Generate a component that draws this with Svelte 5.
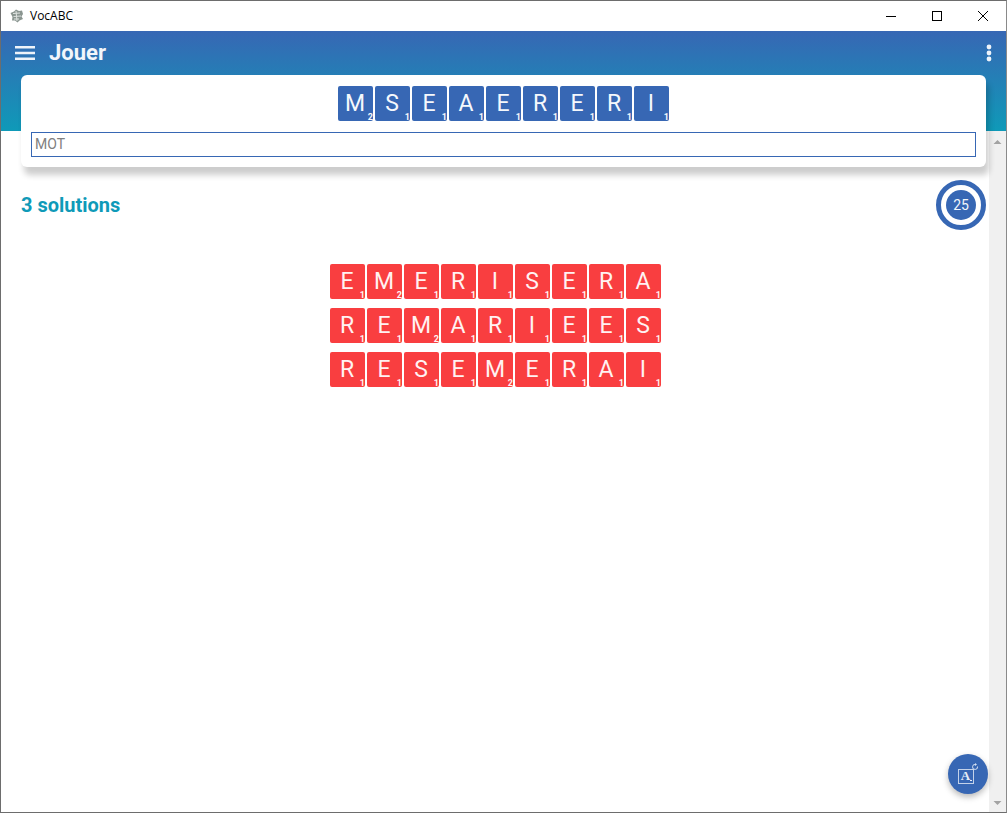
<script lang="ts">
  const rack = [["M", 2], ["S", 1], ["E", 1], ["A", 1], ["E", 1], ["R", 1], ["E", 1], ["R", 1], ["I", 1]];
  const points: Record<string, number> = { M: 2 };
  const solutions = ["EMERISERA", "REMARIEES", "RESEMERAI"];
</script>

<div class="window">
  <div class="titlebar">
    <svg class="app-icon" width="16" height="16" viewBox="0 0 16 16">
      <path d="M1.500 5 L5 3.500 L7 1.500 L10 3 L13 2.500 L14 6 L12.500 8.500 L14 11 L10.500 12.500 L8.500 14.500 L6 12.500 L3 12.500 L3.500 9 Z" fill="#8a9590" />
      <path d="M4 5.500 L11 5 M4.500 8.500 L12 8 M5 11 L10 11 M7 3 L8 13" stroke="#dfe3e1" stroke-width="1" fill="none" />
    </svg>
    <span class="title">VocABC</span>
    <div class="win-buttons">
      <svg width="46" height="30" viewBox="0 0 46 30"><path d="M18 15.500 H28" stroke="#000" fill="none" /></svg>
      <svg width="46" height="30" viewBox="0 0 46 30"><rect x="18.500" y="10.500" width="9" height="9" stroke="#000" fill="none" /></svg>
      <svg width="46" height="30" viewBox="0 0 46 30"><path d="M18 10 L28 20 M28 10 L18 20" stroke="#000" fill="none" /></svg>
    </div>
  </div>

  <div class="header">
    <div class="toolbar">
      <svg class="menu" width="20" height="14" viewBox="0 0 20 14">
        <path d="M0 0h20v2.400H0zM0 5.800h20v2.400H0zM0 11.600h20V14H0z" fill="#eef3fa" />
      </svg>
      <h1>Jouer</h1>
      <svg class="dots" width="6" height="18" viewBox="0 0 6 18">
        <circle cx="3" cy="3" r="2.400" fill="#eef3fa" />
        <circle cx="3" cy="9" r="2.400" fill="#eef3fa" />
        <circle cx="3" cy="15" r="2.400" fill="#eef3fa" />
      </svg>
    </div>
  </div>

  <div class="content">
    <div class="main">
      <div class="card">
        <div class="tiles">
          {#each rack as [letter, pts]}
            <div class="tile blue">{letter}<span class="pts">{pts}</span></div>
          {/each}
        </div>
        <input class="word" placeholder="MOT" />
      </div>

      <div class="status">
        <span class="count">3 solutions</span>
        <div class="ring"><div class="ring-inner">25</div></div>
      </div>

      <div class="solutions">
        {#each solutions as word}
          <div class="tiles">
            {#each word.split("") as letter}
              <div class="tile red">{letter}<span class="pts">{points[letter] ?? 1}</span></div>
            {/each}
          </div>
        {/each}
      </div>
    </div>

    <div class="scrollbar">
      <svg width="17" height="17" viewBox="0 0 17 17"><path d="M4.500 13 L8.500 9 L12.500 13 Z" fill="#a3a3a3" /></svg>
      <svg width="17" height="17" viewBox="0 0 17 17"><path d="M4.500 6 L8.500 10 L12.500 6 Z" fill="#a3a3a3" /></svg>
    </div>

    <button class="fab" aria-label="Mélanger">
      <svg width="24" height="24" viewBox="0 0 24 24">
        <rect x="2.500" y="7.500" width="15" height="14" stroke="#c3d2e9" fill="none" />
        <text x="9.500" y="18" class="fab-letter">A</text>
        <path d="M14 18.500h2" stroke="#e6edf7" fill="none" />
        <path d="M21.500 4.500 A2.500 2.500 0 1 1 19.500 2.500" stroke="#d5e0f0" fill="none" />
        <path d="M19 1 L21 2.500 L19 4 Z" fill="#d5e0f0" />
      </svg>
    </button>
  </div>
</div>

<style>
  :global(body) {
    margin: 0;
    background: #fff;
  }

  .window {
    box-sizing: border-box;
    width: 1007px;
    height: 813px;
    border: 1px solid #6d6d6d;
    border-right-color: #8a8a8a;
    display: flex;
    flex-direction: column;
    overflow: hidden;
    font-family: Roboto, sans-serif;
    background: #fff;
  }

  .titlebar {
    height: 30px;
    flex: none;
    display: flex;
    align-items: center;
    background: #fff;
    position: relative;
  }

  .app-icon {
    margin-left: 8px;
    margin-right: 5px;
  }

  .title {
    font-family: "Open Sans", sans-serif;
    font-size: 12px;
    color: #000;
    margin-top: -1px;
  }

  .win-buttons {
    margin-left: auto;
    display: flex;
    margin-right: 0;
  }

  .win-buttons svg {
    display: block;
  }

  .header {
    height: 100px;
    flex: none;
    background: linear-gradient(#3767b4, #0f9ab8);
  }

  .toolbar {
    height: 44px;
    display: flex;
    align-items: center;
    padding: 0 14px;
  }

  .menu {
    flex: none;
  }

  h1 {
    margin: -2px 0 0 14px;
    font-size: 22px;
    font-weight: 700;
    color: #f2f6fb;
    flex: 1;
  }

  .content {
    flex: 1;
    display: flex;
    position: relative;
    min-height: 0;
  }

  .main {
    flex: 1;
    min-width: 0;
    padding: 0 3px 0 20px;
  }

  .card {
    margin-top: -56px;
    height: 92px;
    box-sizing: border-box;
    padding: 11px 10px 0;
    background: #fff;
    border-radius: 6px;
    box-shadow: 3px 8px 6px rgba(0, 0, 0, 0.2);
    position: relative;
  }

  .tiles {
    display: flex;
    justify-content: center;
    gap: 2px;
  }

  .tile {
    position: relative;
    box-sizing: border-box;
    width: 35px;
    height: 35px;
    border-radius: 2px;
    display: flex;
    align-items: center;
    justify-content: center;
    padding: 0 1px 0 0;
    font-size: 23px;
    color: #f5f8fc;
  }

  .blue {
    background: #3767b4;
  }

  .red {
    background: #f93e40;
    color: #fff2f2;
  }

  .pts {
    position: absolute;
    right: 0;
    bottom: 0;
    font-size: 9px;
    font-weight: 700;
    line-height: 7px;
  }

  .word {
    display: block;
    box-sizing: border-box;
    width: 100%;
    height: 25px;
    margin-top: 11px;
    padding: 0 3px 2px;
    border: 1px solid #3767b4;
    border-radius: 0;
    outline: none;
    font-family: Roboto, sans-serif;
    font-size: 14px;
  }

  .word::placeholder {
    color: #808080;
    opacity: 1;
  }

  .status {
    display: flex;
    align-items: center;
    justify-content: space-between;
    margin-top: 13px;
  }

  .count {
    font-size: 20px;
    font-weight: 700;
    color: #0f9ab8;
  }

  .ring {
    box-sizing: border-box;
    width: 50px;
    height: 50px;
    border: 5px solid #3767b4;
    border-radius: 50%;
    display: flex;
    align-items: center;
    justify-content: center;
  }

  .ring-inner {
    width: 30px;
    height: 30px;
    border-radius: 50%;
    background: #3767b4;
    color: #f2f6fb;
    font-size: 14px;
    font-weight: 450;
    display: flex;
    align-items: center;
    justify-content: center;
  }

  .solutions {
    margin-top: 34px;
    padding-right: 16px;
    display: flex;
    flex-direction: column;
    gap: 9px;
  }

  .scrollbar {
    width: 17px;
    flex: none;
    background: #f0f0f0;
    display: flex;
    flex-direction: column;
    justify-content: space-between;
  }

  .scrollbar svg {
    display: block;
  }

  .fab {
    position: absolute;
    right: 18px;
    bottom: 18px;
    width: 40px;
    height: 40px;
    padding: 0;
    border: none;
    border-radius: 50%;
    background: #3767b4;
    box-shadow: 0 3px 6px rgba(0, 0, 0, 0.28);
    display: flex;
    align-items: center;
    justify-content: center;
  }

  .fab-letter {
    font-family: "Liberation Serif", serif;
    font-size: 13px;
    font-weight: 700;
    fill: #e6edf7;
    text-anchor: middle;
  }
</style>
